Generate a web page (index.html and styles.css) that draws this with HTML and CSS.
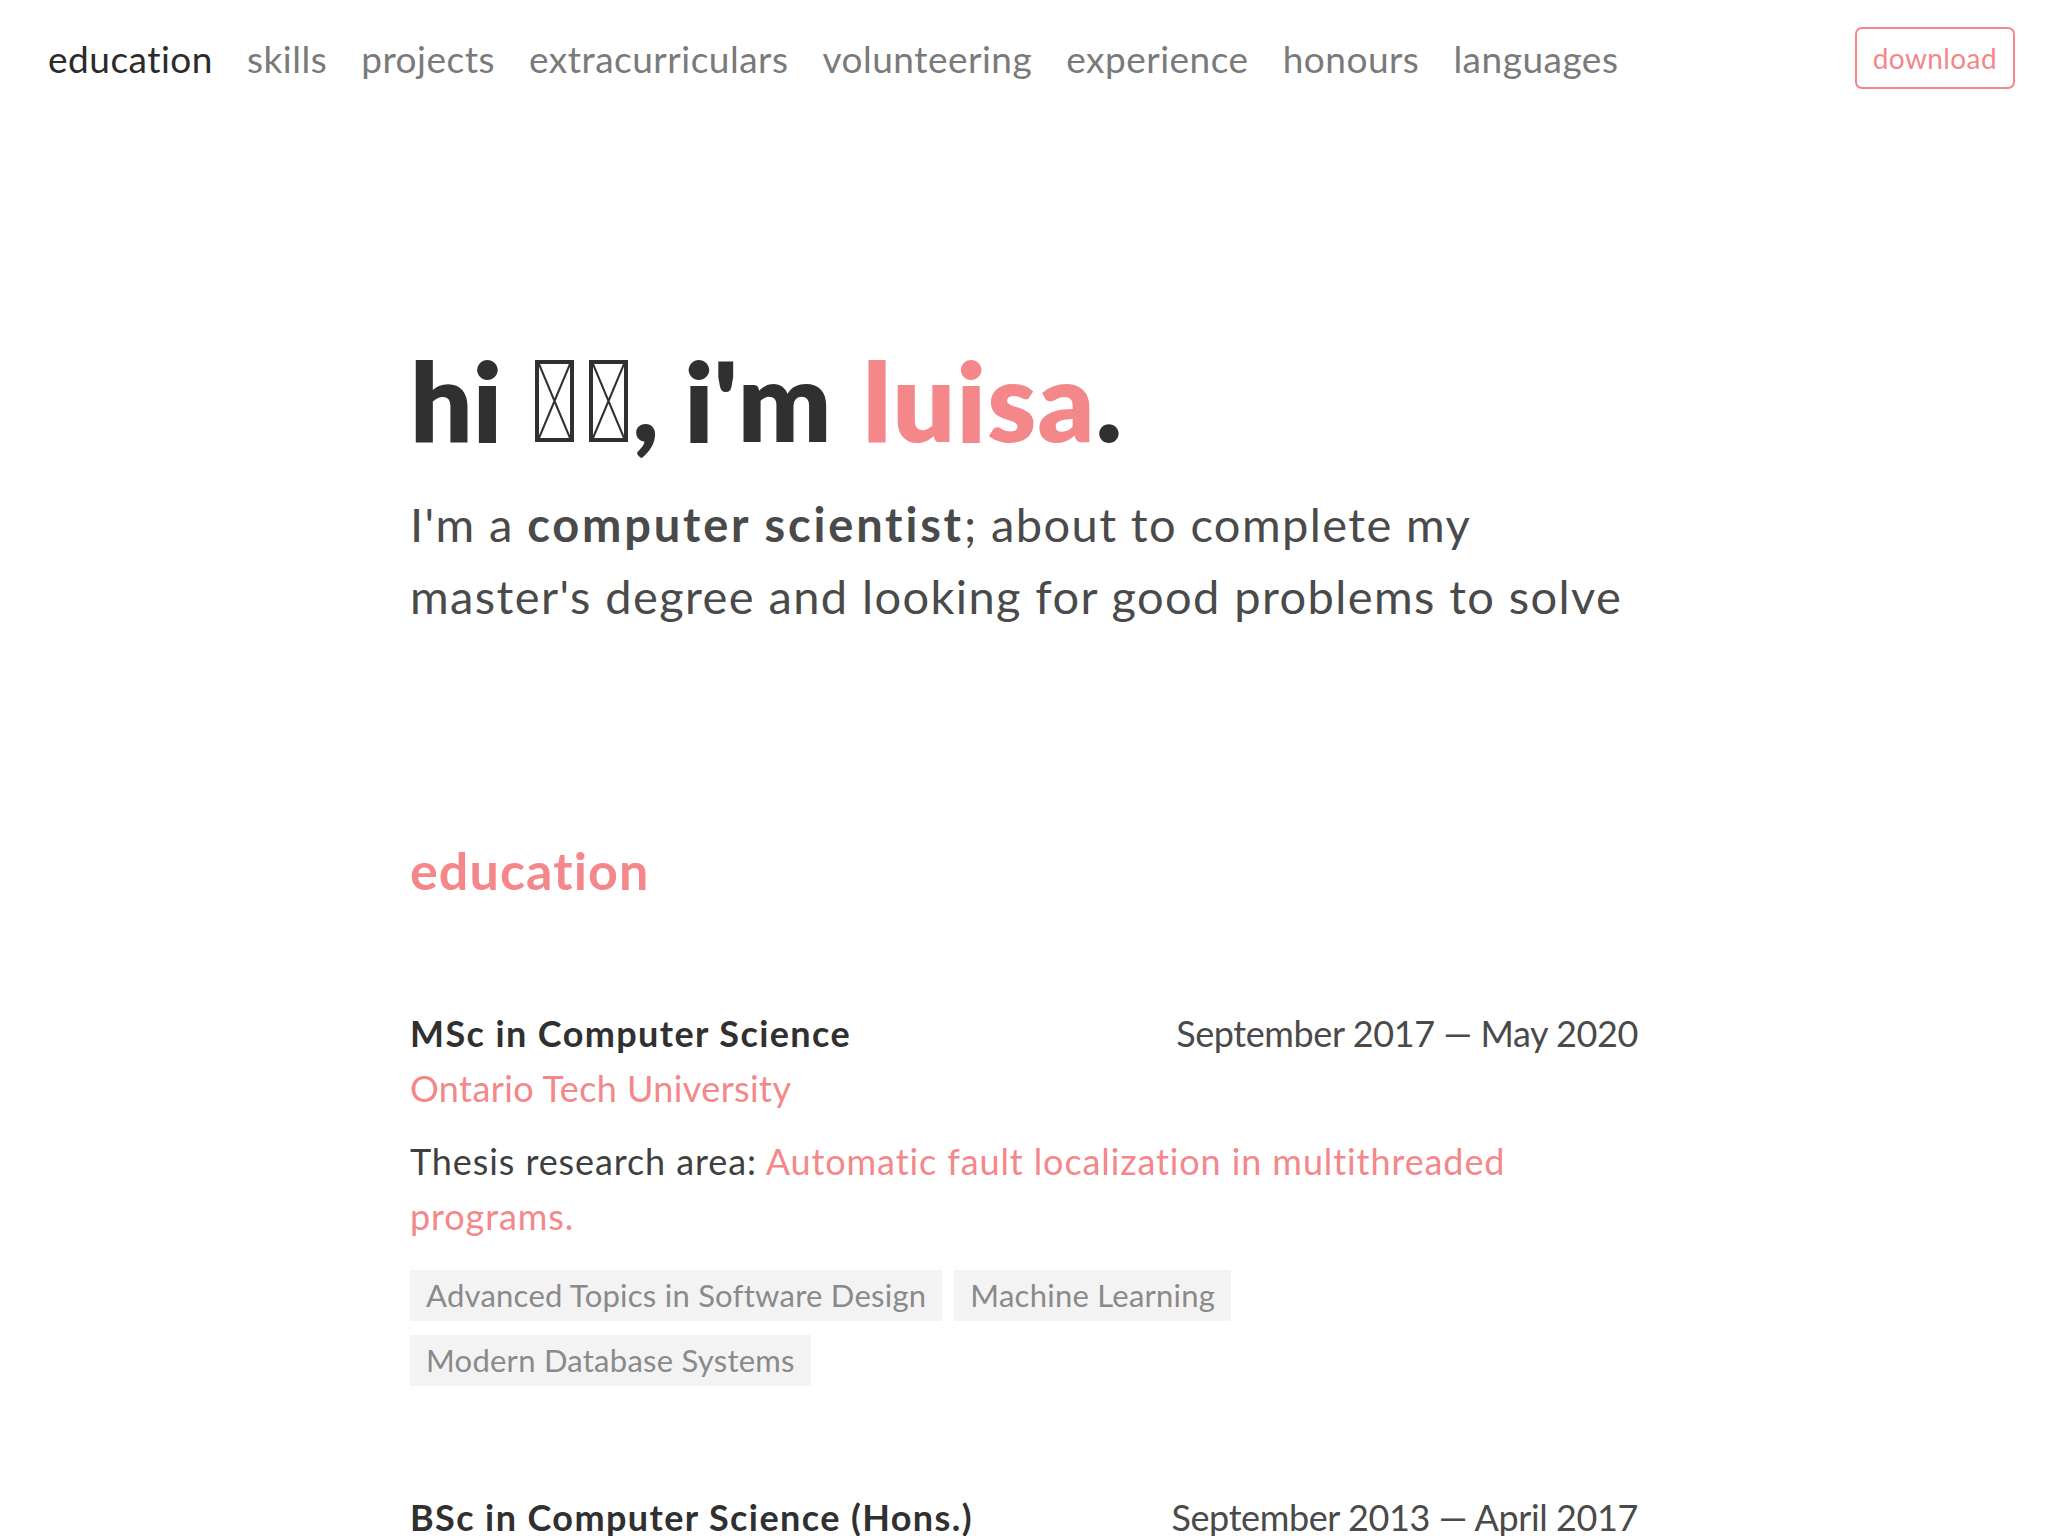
FILE: index.html
```html
<!DOCTYPE html>
<html lang="en">
<head>
<meta charset="utf-8">
<title>luisa</title>
<link rel="stylesheet" href="styles.css">
</head>
<body>
<header class="topbar">
  <nav class="menu">
    <a class="menu-link is-active" href="#education">education</a>
    <a class="menu-link" href="#skills">skills</a>
    <a class="menu-link" href="#projects">projects</a>
    <a class="menu-link" href="#extracurriculars">extracurriculars</a>
    <a class="menu-link" href="#volunteering">volunteering</a>
    <a class="menu-link" href="#experience">experience</a>
    <a class="menu-link" href="#honours">honours</a>
    <a class="menu-link" href="#languages">languages</a>
  </nav>
  <a class="download" href="#">download</a>
</header>

<main class="page">
  <section class="hero">
    <h1 class="hero-title">hi <span class="wave" role="img" aria-label="👋🏻"><svg class="tofu" width="39" height="82" viewBox="0 0 39 82"><rect x="2" y="2" width="35" height="78" fill="none" stroke="currentColor" stroke-width="4"/><path d="M4 4 L35 78 M35 4 L4 78" stroke="currentColor" stroke-width="2" fill="none"/></svg><svg class="tofu tofu-2" width="39" height="82" viewBox="0 0 39 82"><rect x="2" y="2" width="35" height="78" fill="none" stroke="currentColor" stroke-width="4"/><path d="M4 4 L35 78 M35 4 L4 78" stroke="currentColor" stroke-width="2" fill="none"/></svg></span>, i'm <span class="accent">luisa</span>.</h1>
    <p class="hero-sub">I'm a <strong>computer scientist</strong>; about to complete my master's degree and looking for good problems to solve</p>
  </section>

  <section class="section" id="education">
    <h2 class="section-title">education</h2>

    <article class="entry">
      <div class="entry-head">
        <h3 class="entry-title">MSc in Computer Science</h3>
        <span class="entry-date">September 2017 — May 2020</span>
      </div>
      <div class="entry-org">Ontario Tech University</div>
      <p class="entry-text">Thesis research area: <span class="accent-text">Automatic fault localization in multithreaded programs.</span></p>
      <ul class="tags">
        <li class="tag">Advanced Topics in Software Design</li>
        <li class="tag">Machine Learning</li>
        <li class="tag">Modern Database Systems</li>
      </ul>
    </article>

    <article class="entry">
      <div class="entry-head">
        <h3 class="entry-title">BSc in Computer Science (Hons.)</h3>
        <span class="entry-date">September 2013 — April 2017</span>
      </div>
      <div class="entry-org">Ontario Tech University</div>
    </article>
  </section>
</main>
</body>
</html>
```

FILE: styles.css
```css
html, body {
  margin: 0;
  padding: 0;
  background: #ffffff;
}

body {
  font-family: Lato, "Noto Sans", sans-serif;
  color: #444444;
}

a {
  text-decoration: none;
}

.topbar {
  display: flex;
  align-items: center;
  justify-content: space-between;
  padding: 27px 33px 27px 48px;
}

.menu {
  display: flex;
  align-items: center;
  gap: 34px;
}

.menu-link {
  font-size: 37px;
  color: #7a7a7a;
  letter-spacing: 0.5px;
}

.menu-link.is-active {
  color: #2b2b2b;
}

.download {
  display: block;
  box-sizing: border-box;
  height: 62px;
  padding: 0 16px;
  line-height: 58px;
  border: 2px solid #f48789;
  border-radius: 7px;
  color: #f48789;
  font-size: 28px;
  letter-spacing: 0.4px;
}

.page {
  width: 1228px;
  margin: 0 auto;
}

.hero-title {
  margin: 217px 0 0;
  font-size: 110px;
  line-height: 1.2;
  font-weight: 800;
  color: #303030;
}

.wave {
  display: inline-flex;
  gap: 15px;
  margin-left: 8px;
  margin-right: 4px;
  color: #303030;
}

.tofu {
  display: block;
}

.accent {
  color: #f48789;
  margin-left: 6px;
  letter-spacing: 1.3px;
}

.hero-sub {
  margin: 23px 0 0;
  font-size: 47px;
  line-height: 72px;
  color: #4a4a4a;
  letter-spacing: 1.4px;
}

.hero-sub strong {
  font-weight: 700;
  letter-spacing: 2.8px;
}

.section-title {
  margin: 207px 0 0;
  font-size: 52px;
  line-height: 1.2;
  font-weight: 700;
  color: #f48789;
  letter-spacing: 1.1px;
}

.entry {
  margin-top: 111px;
}

.entry + .entry {
  margin-top: 110px;
}

.entry-head {
  display: flex;
  justify-content: space-between;
  align-items: baseline;
}

.entry-title {
  margin: 0;
  font-size: 36px;
  line-height: 1.2;
  font-weight: 700;
  color: #303030;
  letter-spacing: 1.4px;
}

.entry-date {
  font-size: 36px;
  line-height: 1.2;
  color: #4a4a4a;
  letter-spacing: -0.4px;
}

.entry-org {
  margin-top: 11px;
  font-size: 36px;
  line-height: 1.2;
  color: #f48789;
  letter-spacing: 0.4px;
}

.entry-text {
  margin: 24px 0 0;
  font-size: 36px;
  line-height: 55px;
  color: #3f3f3f;
  letter-spacing: 0.9px;
}

.accent-text {
  color: #f48789;
}

.tags {
  display: flex;
  flex-wrap: wrap;
  gap: 14px 12px;
  margin: 26px 0 0;
  padding: 0;
  list-style: none;
}

.tag {
  height: 51px;
  line-height: 51px;
  padding: 0 16px;
  background: #f3f3f3;
  color: #8a8a8a;
  font-size: 31px;
  letter-spacing: 0.25px;
}
```
